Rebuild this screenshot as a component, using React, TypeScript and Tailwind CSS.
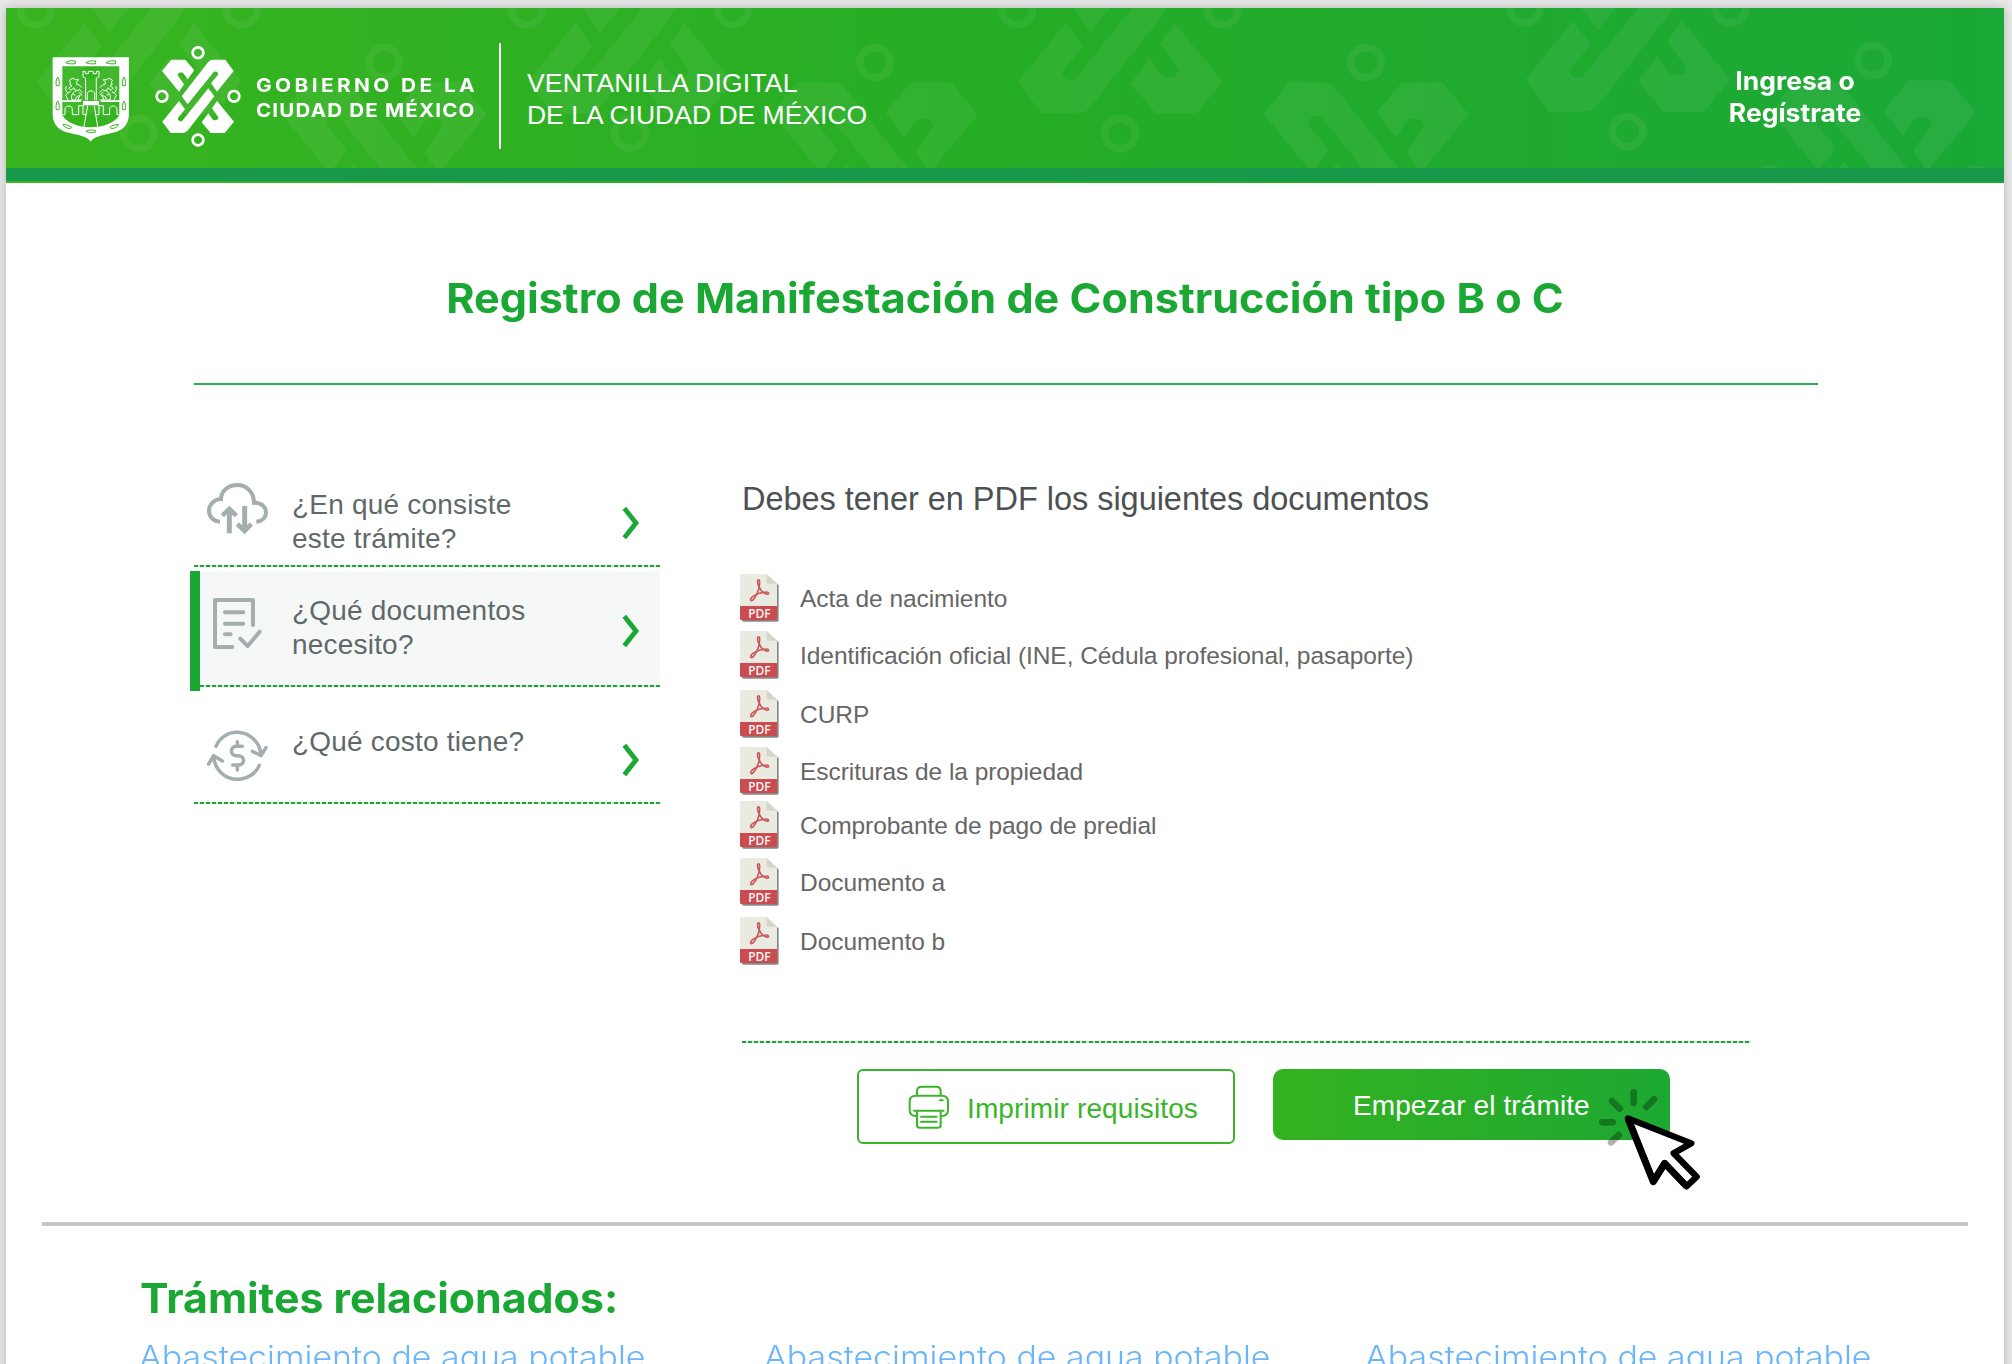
import type { ReactNode } from 'react';

const SANS = "font-['Liberation_Sans',Arial,sans-serif]";
const GEO = "font-['Inter',sans-serif]";
const DASHED = 'h-[2px] bg-[repeating-linear-gradient(90deg,#1aa733_0_4px,#c9ecd0_4px_6.08px)]';

function Emblem() {
  return (
    <>
      <path d="M-80-110H-38L-11-78L-31-51L-43-68C-48-75-62-72-61-63L-42-36L-57-14L-108-76Z" />
      <path d="M82-110L107-76L57-14L39-39L60-65C63-71 53-78 47-73L-31 24L-49 0L30-102C35-108 40-110 46-110Z" />
      <path d="M80 110H38L11 78L31 51L43 68C48 75 62 72 61 63L42 36L57 14L108 76Z" />
      <path d="M-82 110L-107 76L-57 14L-39 39L-60 65C-63 71-53 78-47 73L31-24L49 0L-30 102C-35 108-40 110-46 110Z" />
      <path
        fillRule="evenodd"
        d="M0-151a20 20 0 1 0 .01 0ZM0-143a12 12 0 1 1-.01 0ZM0 111a20 20 0 1 0 .01 0ZM0 119a12 12 0 1 1-.01 0ZM-108-20a20 20 0 1 0 .01 0ZM-108-12a12 12 0 1 1-.01 0ZM108-20a20 20 0 1 0 .01 0ZM108-12a12 12 0 1 1-.01 0Z"
      />
    </>
  );
}

function HeaderPattern() {
  return (
    <svg className="absolute left-0 top-0" width="1998" height="160" viewBox="6 8 1998 160" fill="#fff" fillOpacity="0.055">
      {[138.8, 629.9, 1120].map((x) => (
        <g key={x} transform={`translate(${x} 9.7) scale(.953 .945)`}><Emblem /></g>
      ))}
      <g transform="translate(1627.5 7.7) scale(.953 .945)"><Emblem /></g>
      {[384, 875, 1366].map((x) => (
        <g key={x} transform={`translate(${x} 186.3) scale(-.953 .945)`}><Emblem /></g>
      ))}
      <g transform="translate(1873 184.3) scale(-.953 .945)"><Emblem /></g>
    </svg>
  );
}

function ShieldSide() {
  return (
    <>
      <path d="M188 303H243M187 343H195V327C195 320 200 317 206 317C212 317 217 320 217 327V343H236V316H250" />
      <path d="M246 262C241 256 236 252 230 252V245L236 238H226L219 233L208 240L212 246L209 252L216 256L206 263L213 270L222 262L227 272L239 268L247 277" />
      <path d="M227 272C217 277 212 287 216 299H227L229 290L241 284L233 299H247M199 257C195 266 197 272 203 277L197 285L204 299M203 277L211 275M236 276L247 284M219 281L226 285" />
    </>
  );
}

function Shield() {
  return (
    <svg className="mt-[49px] ml-[46px] shrink-0" width="77.6" height="85" viewBox="156 170 233 255">
      <path fill="#fff" fillRule="evenodd" d="M158 171H387V340C387 372 370 388 345 396C310 405 283 408 272 424C262 408 235 405 200 396C175 388 158 372 158 340ZM187 198V345C200 368 235 381 272 381C310 381 345 368 358 345V198Z" />
      <g fill="none" stroke="#fff" strokeWidth="3" strokeLinejoin="round">
        <path d="M257 300V234L249 229V213H256V220H265V213H280V220H289V213H297V229L289 234V300" />
        <path d="M262 300V282C262 268 284 268 284 282V300" />
        <path d="M263 316L252 379M283 316L293 379M249 314V343H258M297 314V343H288" />
        <ShieldSide />
        <g transform="translate(546 0) scale(-1 1)"><ShieldSide /></g>
      </g>
      <path d="M187 300H243V305H187ZM303 300H358V305H303ZM249 302H297V315H249Z" fill="#fff" />
      <g fill="none" stroke="#35b31f" strokeWidth="3">
        <path d="M197 187C205 181 217 180 226 182V190C217 191 205 191 197 187ZM258 187C266 181 278 180 287 182V190C278 191 266 191 258 187ZM318 187C326 181 338 180 347 182V190C338 191 326 191 318 187Z" />
        <path d="M173 230C168 238 167 247 169 256H177C179 247 178 238 173 230ZM173 302C168 310 167 319 169 328H177C179 319 178 310 173 302ZM372 230C367 238 366 247 368 256H376C378 247 377 238 372 230ZM372 302C367 310 366 319 368 328H376C378 319 377 310 372 302Z" />
        <path d="M189 373C198 372 208 375 215 381L211 385C202 385 194 381 189 373ZM258 393C266 388 278 388 287 391V395C278 398 266 398 258 393ZM356 373C347 372 337 375 330 381L334 385C343 385 351 381 356 373Z" />
      </g>
    </svg>
  );
}

function Chevron({ className }: { className: string }) {
  return (
    <svg className={className} width="22" height="34" viewBox="1320 139 66 102" fill="none" stroke="#1aa733" strokeWidth="14.5">
      <path d="M1333 146L1368 190L1333 234" />
    </svg>
  );
}

function CloudIcon() {
  return (
    <svg width="65" height="55" viewBox="75 60 195 165" fill="none" stroke="#a4aeaf" strokeWidth="12">
      <path d="M120 185C101 185 87 170 87 152C87 133 103 118 123 117C123 93 145 75 172 75C199 75 222 96 222 128C243 127 258 141 258 157C258 173 246 184 229 185" />
      <path strokeWidth="15" d="M148 220V152M194 138V206" />
      <path strokeWidth="14" d="M127 167L148 147L169 167M172 192L194 213L214 192" />
    </svg>
  );
}

function DocumentIcon() {
  return (
    <svg width="65" height="55" viewBox="75 405 195 165" fill="none" stroke="#a4aeaf" strokeWidth="12" strokeLinecap="round" strokeLinejoin="round">
      <path d="M157 561H105V420H219V495M135 457H190M135 491H190M135 523H152M181 536L203 558L239 515" />
    </svg>
  );
}

function CostIcon() {
  return (
    <svg width="65" height="55" viewBox="75 803 195 165" fill="none" stroke="#a4aeaf" strokeWidth="10.5" strokeLinecap="round" strokeLinejoin="round">
      <path d="M108 858C119 832 143 816 171 816C209 816 241 846 243 885M217 873L243 886L258 862" />
      <path d="M238 915C227 941 201 957 172 957C134 957 103 927 101 888M86 911L101 886L127 902" />
      <path d="M187 858H169C150 858 149 886 168 886H175C196 886 195 914 176 914H158M172 844V856M172 916V929" />
    </svg>
  );
}

function PdfIcon() {
  return (
    <svg className="shrink-0" width="40" height="50" viewBox="0 0 120 150">
      <defs>
        <filter id="pdf-shadow" x="-10%" y="-10%" width="130%" height="130%">
          <feGaussianBlur stdDeviation="2" />
        </filter>
      </defs>
      <path d="M6 6H84L116 34V138Q116 143 111 143H11Q6 143 6 138Z" fill="#555" fillOpacity="0.7" filter="url(#pdf-shadow)" />
      <path d="M0 4Q0 0 4 0H80L111 29V97H0Z" fill="#e9eae0" />
      <path d="M80 0L111 29H84Q80 29 80 25Z" fill="#d5d6ca" />
      <path d="M0 96H111V134Q111 138 107 138H4Q0 138 0 134Z" fill="#ca4c50" />
      <path d="M56 17C50 17 53 32 57 38C62 50 70 58 81 61C88 61 87 53 79 54C66 55 52 58 42 65C33 70 29 79 34 80C41 80 52 60 56 46C59 36 61 17 56 17Z" fill="none" stroke="#cc5357" strokeWidth="4.6" strokeLinejoin="round" />
      <text x="25" y="131" fill="#fff" fontSize="38" fontFamily="Noto Sans, sans-serif" fontWeight="500" textLength="67" lengthAdjust="spacingAndGlyphs">PDF</text>
    </svg>
  );
}

function PrinterIcon() {
  return (
    <svg width="42" height="44" viewBox="534 193 126 132" fill="none" stroke="#3ab529" strokeWidth="6" strokeLinecap="round" strokeLinejoin="round">
      <path d="M561 223V212Q561 198 575 198H619Q632 198 632 212V223M558 286C546 286 539 280 539 268V242C539 232 546 225 557 225H636C647 225 654 232 654 242V268C654 280 647 286 635 286M552 270H641M561 272V314Q561 321 568 321H625Q632 321 632 314V272M573 288H620M573 303H620M630 239H638" />
    </svg>
  );
}

function ClickCursor() {
  return (
    <svg className="pointer-events-none absolute left-[323px] top-[17px]" width="106" height="106" viewBox="1036 198 318 318">
      <path d="M1149 217V248M1084 243L1107 266M1187 261L1210 238M1055 307H1086M1081 367L1104 345" fill="none" stroke="#000" strokeOpacity="0.3" strokeWidth="20" strokeLinecap="round" />
      <path d="M1132 295L1322 370L1269 400L1338 470L1308 499L1242 430L1208 485Z" fill="#fff" stroke="#000" strokeWidth="19" strokeLinejoin="round" />
      <path d="M1132 295L1208 485L1242 430L1308 499" fill="none" stroke="#000" strokeWidth="21" strokeLinejoin="round" />
    </svg>
  );
}

const documents = [
  { label: 'Acta de nacimiento', row: 'h-[57px]' },
  { label: 'Identificación oficial (INE, Cédula profesional, pasaporte)', row: 'h-[59px]' },
  { label: 'CURP', row: 'h-[57px]' },
  { label: 'Escrituras de la propiedad', row: 'h-[54px]' },
  { label: 'Comprobante de pago de predial', row: 'h-[57px]' },
  { label: 'Documento a', row: 'h-[59px]' },
  { label: 'Documento b', row: 'h-[124px]' },
];

const related = ['Abastecimiento de agua potable', 'Abastecimiento de agua potable', 'Abastecimiento de agua potable'];

function SideText({ children }: { children: ReactNode }) {
  return <p className="whitespace-nowrap text-[28px] leading-[34px] tracking-[0.2px] text-[#5f696a]">{children}</p>;
}

export default function App() {
  return (
    <div className={`h-[1364px] w-[2012px] overflow-hidden bg-[#e9e9e9] pt-2 pl-[6px] ${SANS}`}>
      <div className="flex h-[1380px] w-[1998px] flex-col bg-white shadow-[0_0_10px_rgba(0,0,0,0.22)]">
        <header className="relative h-[175px] shrink-0 overflow-hidden bg-linear-to-r from-[#38b41f] via-[#25ad26] to-[#1aa836]">
          <HeaderPattern />
          <div className="relative flex h-[160px] items-start text-white">
            <Shield />
            <svg className="mt-[37px] ml-[24px] shrink-0" width="88" height="103" viewBox="-132 -154 264 309" fill="#fff"><Emblem /></svg>
            <div className={`mt-[65px] ml-[14px] w-[243.4px] shrink-0 whitespace-nowrap text-[19px] leading-[25px] font-bold ${GEO}`}>
              <p className="origin-left scale-x-[1.1] tracking-[3.05px]">GOBIERNO DE LA</p>
              <p className="origin-left scale-x-[1.08] tracking-[1.1px]">CIUDAD DE MÉXICO</p>
            </div>
            <div className="mt-[35px] h-[106px] w-[2px] bg-white" />
            <div className="mt-[59px] ml-[26px] flex-1 whitespace-nowrap text-[26.5px] leading-[32px]">
              <p className="tracking-[0.2px]">VENTANILLA DIGITAL</p>
              <p>DE LA CIUDAD DE MÉXICO</p>
            </div>
            <div className={`mt-[57px] mr-[138px] w-[142px] scale-x-[1.06] text-center text-[25px] leading-[32px] font-bold whitespace-nowrap ${GEO}`}>
              <p>Ingresa o</p>
              <p>Regístrate</p>
            </div>
          </div>
          <div className="relative h-[13px] bg-[#17984a]" />
        </header>

        <h1 className={`mt-[91px] shrink-0 scale-x-[1.052] whitespace-nowrap text-center text-[41px] leading-[48px] font-bold text-[#1aa733] ${GEO}`}>
          Registro de Manifestación de Construcción tipo B o C
        </h1>
        <div className="mt-[61px] ml-[188px] h-[2px] w-[1624px] shrink-0 bg-[#2fae4a]" />

        <div className="flex h-[759px] shrink-0">
          <nav className="mt-[92px] ml-[184px] w-[470px]">
            <div className="flex h-[88px] items-start pl-[15px]">
              <div className="mt-[3px] w-[87px]"><CloudIcon /></div>
              <div className="mt-[11px] flex-1"><SideText>¿En qué consiste<br />este trámite?</SideText></div>
              <Chevron className="mt-[29px] mr-[18px]" />
            </div>
            <div className={`ml-[4px] ${DASHED}`} />
            <div className="mt-1 flex h-[120px]">
              <div className="w-[10px] bg-[#1aa733]" />
              <div className="flex-1">
                <div className="flex h-[114px] items-start bg-[#f6f8f8] pl-[5px]">
                  <div className="mt-[24px] w-[87px]"><DocumentIcon /></div>
                  <div className="mt-[23px] flex-1"><SideText>¿Qué documentos<br />necesito?</SideText></div>
                  <Chevron className="mt-[43px] mr-[18px]" />
                </div>
                <div className={DASHED} />
              </div>
            </div>
            <div className="flex h-[111px] items-start pl-[15px]">
              <div className="mt-[37px] w-[87px]"><CostIcon /></div>
              <div className="mt-[34px] flex-1"><SideText>¿Qué costo tiene?</SideText></div>
              <Chevron className="mt-[52px] mr-[18px]" />
            </div>
            <div className={`ml-[4px] ${DASHED}`} />
          </nav>

          <main className="ml-[80px] w-[1011px] pt-[94px]">
            <h2 className="ml-[2px] whitespace-nowrap text-[32.5px] leading-[40px] tracking-[-0.03px] text-[#4c5152]">Debes tener en PDF los siguientes documentos</h2>
            <ul className="mt-[55px]">
              {documents.map((d) => (
                <li key={d.label} className={`flex items-start ${d.row}`}>
                  <PdfIcon />
                  <span className="mt-px ml-[20px] whitespace-nowrap text-[24.5px] leading-[48px] tracking-[-0.06px] text-[#666]">{d.label}</span>
                </li>
              ))}
            </ul>
            <div className={`ml-[2px] ${DASHED}`} />
            <div className="mt-[26px] flex items-start pl-[117px]">
              <button className="flex h-[75px] w-[378px] items-center rounded-md border-2 border-[#3ab529] pl-[49px] text-[28px] tracking-[0.12px] text-[#3ab529]">
                <PrinterIcon />
                <span className="mt-[4px] ml-[17px] whitespace-nowrap leading-[34px]">Imprimir requisitos</span>
              </button>
              <div className="relative ml-[38px]">
                <button className="h-[71px] w-[397px] rounded-[10px] bg-linear-to-r from-[#34b320] to-[#1ca831] pt-[3px] pl-[80px] text-left text-[28px] leading-[34px] tracking-[0.1px] text-white">
                  Empezar el trámite
                </button>
                <ClickCursor />
              </div>
            </div>
          </main>
        </div>

        <div className="mt-[78px] ml-[36px] h-[4px] w-[1926px] shrink-0 bg-[#c5c5c5]" />
        <h2 className={`mt-[48px] ml-[134px] shrink-0 origin-left scale-x-[1.045] whitespace-nowrap text-[41px] leading-[48px] font-bold text-[#1aa733] ${GEO}`}>Trámites relacionados:</h2>
        <div className={`mt-[16px] ml-[133px] grid shrink-0 grid-cols-[625px_601px_600px] text-[31px] leading-[38px] font-light whitespace-nowrap text-[#6bb6fb] ${GEO}`}>
          {related.map((label, i) => (
            <a key={i} className="origin-left scale-x-[1.093]">{label}</a>
          ))}
        </div>
      </div>
    </div>
  );
}
